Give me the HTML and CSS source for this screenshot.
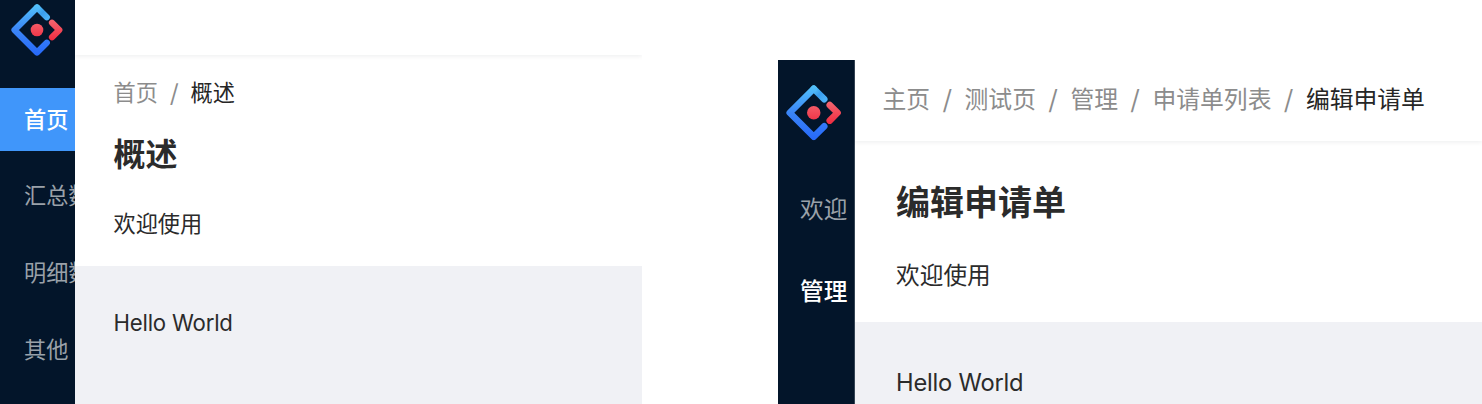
FILE: index.html
```
<!DOCTYPE html>
<html lang="zh-CN">
<head>
    <meta charset="UTF-8">
    <meta name="viewport" content="width=device-width, initial-scale=1.0">
    <title>概述</title>
    <link rel="stylesheet" href="styles.css">
</head>
<body>
    <!-- Shared logo and gradients -->
    <svg class="defs" width="0" height="0">
        <defs>
            <linearGradient id="blue" gradientUnits="userSpaceOnUse" x1="26" y1="0" x2="26" y2="52">
                <stop offset="0" stop-color="#53c4fa"/>
                <stop offset="0.5" stop-color="#3b85f7"/>
                <stop offset="1" stop-color="#2668fa"/>
            </linearGradient>
            <linearGradient id="tip" gradientUnits="userSpaceOnUse" x1="26" y1="4" x2="36" y2="14">
                <stop offset="0" stop-color="#53c0f8"/>
                <stop offset="0.5" stop-color="#399ced"/>
                <stop offset="1" stop-color="#4bb0f7"/>
            </linearGradient>
            <linearGradient id="red" gradientUnits="userSpaceOnUse" x1="26" y1="16" x2="26" y2="37">
                <stop offset="0" stop-color="#f5656f"/>
                <stop offset="1" stop-color="#ee2a3f"/>
            </linearGradient>
        </defs>
        <symbol id="logo" viewBox="0 0 52 52">
            <g fill="none" stroke-width="6.2" stroke-linecap="round" stroke-linejoin="round">
                <path stroke="url(#tip)" d="M26 3.5 35.8 13.3"/>
                <path stroke="url(#blue)" d="M26 3.5 3.5 26 26 48.5 35.8 38.7"/>
                <path stroke="url(#red)" d="M41 18.8 48.3 26 41 33.3"/>
            </g>
            <circle cx="26" cy="26" r="6.3" fill="url(#red)"/>
        </symbol>
    </svg>

    <div class="compare">
        <div class="layout layout-left">
            <div class="sider">
                <svg class="logo"><use href="#logo"/></svg>
                <div class="menu">
                    <div class="menu-item active">首页</div>
                    <div class="menu-item">汇总数据</div>
                    <div class="menu-item">明细数据</div>
                    <div class="menu-item">其他</div>
                </div>
            </div>
            <div class="main">
                <div class="header"></div>
                <div class="page-header">
                    <div class="breadcrumb">
                        <span>首页</span><i>/</i><b>概述</b>
                    </div>
                    <h1>概述</h1>
                    <p>欢迎使用</p>
                </div>
                <div class="content">Hello World</div>
            </div>
        </div>

        <div class="layout layout-right">
            <div class="sider">
                <svg class="logo"><use href="#logo"/></svg>
                <div class="menu">
                    <div class="menu-item">欢迎</div>
                    <div class="menu-item current">管理</div>
                </div>
            </div>
            <div class="main">
                <div class="header">
                    <div class="breadcrumb">
                        <span>主页</span><i>/</i><span>测试页</span><i>/</i><span>管理</span><i>/</i><span>申请单列表</span><i>/</i><b>编辑申请单</b>
                    </div>
                </div>
                <div class="page-header">
                    <h1>编辑申请单</h1>
                    <p>欢迎使用</p>
                </div>
                <div class="content">Hello World</div>
            </div>
        </div>
    </div>
</body>
</html>
```
FILE: styles.css
```
* {
    box-sizing: border-box;
}

body {
    margin: 0;
    background: #fff;
    font-family: Inter, "Noto Sans CJK SC", sans-serif;
    color: #2b2b2b;
    overflow: hidden;
}

h1, p {
    margin: 0;
}

.defs {
    display: block;
}

.compare {
    display: flex;
    justify-content: space-between;
    height: 404px;
}

.layout {
    display: flex;
    overflow: hidden;
}

.layout-left {
    width: 642px;
    font-size: 22.2px;
}

.layout-right {
    width: 704px;
    margin-top: 60px;
    font-size: 23.7px;
}

.sider {
    flex: none;
    overflow: hidden;
    background: #03152a;
}

.layout-left .sider {
    width: 75px;
}

.layout-right .sider {
    width: 77px;
    border-right: 1px solid #364555;
}

.logo {
    display: block;
}

.layout-left .logo {
    width: 52px;
    height: 52px;
    margin: 4px 0 31.5px 11px;
}

.layout-right .logo {
    width: 55.5px;
    height: 55.5px;
    margin: 25px 0 36.5px 8px;
}

.menu {
    display: flex;
    flex-direction: column;
}

.menu-item {
    white-space: nowrap;
    color: #9aa1a9;
}

.layout-left .menu {
    gap: 13px;
}

.layout-left .menu-item {
    height: 63.8px;
    line-height: 64px;
    padding-left: 24px;
}

.layout-right .menu {
    gap: 18px;
}

.layout-right .menu-item {
    height: 64px;
    line-height: 65px;
    padding-left: 22px;
}

.menu-item.active {
    background: #4096fa;
    color: #fff;
    font-weight: 500;
}

.menu-item.current {
    color: #fff;
    font-weight: 500;
}

.main {
    flex: 1;
    display: flex;
    flex-direction: column;
}

.header {
    flex: none;
    position: relative;
    box-shadow: 0 1px 5px rgba(0, 21, 41, 0.08);
}

.layout-left .header {
    height: 55px;
}

.layout-right .header {
    height: 81px;
    padding: 20px 0 0 27.5px;
}

.breadcrumb {
    display: flex;
    line-height: 36px;
    white-space: nowrap;
    color: #8c8c8c;
    font-family: "Noto Sans CJK SC", sans-serif;
}

.breadcrumb i {
    font-style: normal;
    font-weight: 500;
    margin: 0 12px;
}

.layout-right .breadcrumb i {
    margin: 0 12.6px;
}

.layout-right .breadcrumb {
    font-size: 23.8px;
}

.breadcrumb b {
    color: #262626;
    font-weight: 400;
}

.page-header h1 {
    font-weight: 700;
    line-height: 48px;
}

.layout-left .page-header {
    height: 211px;
    padding: 18px 0 0 38.5px;
}

.layout-left h1 {
    font-size: 32px;
    margin-top: 22px;
}

.layout-left p {
    line-height: 36px;
    margin-top: 27px;
}

.layout-right .page-header {
    height: 181px;
    padding: 38px 0 0 41px;
}

.layout-right h1 {
    font-size: 34px;
}

.layout-right p {
    line-height: 36px;
    margin-top: 31px;
}

.content {
    flex: 1;
    background: #f0f1f5;
    line-height: 36px;
    letter-spacing: -0.2px;
}

.layout-left .content {
    padding: 39px 0 0 38.5px;
}

.layout-right .content {
    padding: 43px 0 0 41px;
}
```
